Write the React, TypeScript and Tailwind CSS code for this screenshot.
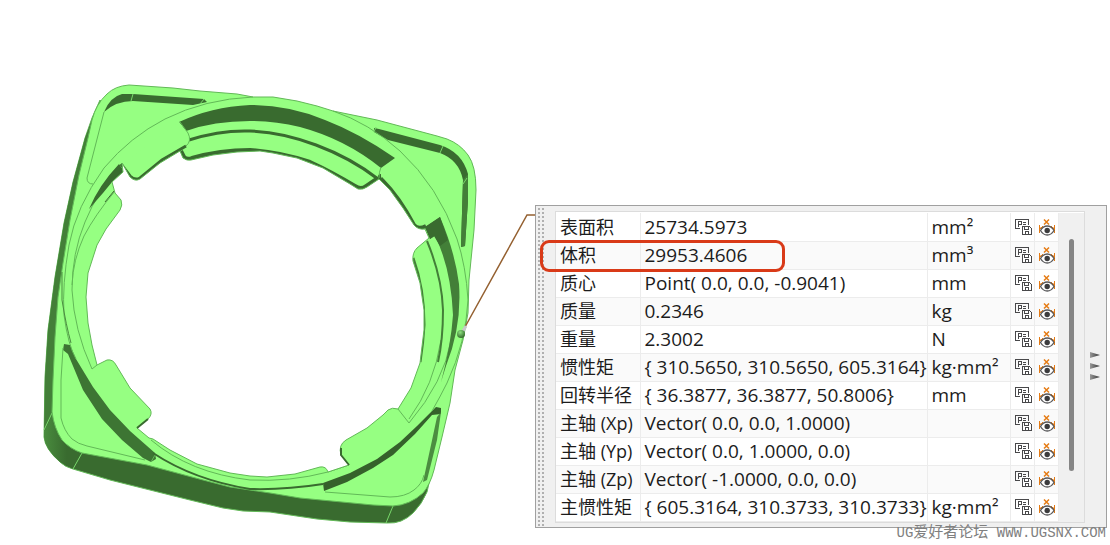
interface Measurement {
  label: string;
  value: string;
  unit: string;
}

const measurements: Measurement[] = [
  { label: '表面积', value: '25734.5973', unit: 'mm²' },
  { label: '体积', value: '29953.4606', unit: 'mm³' },
  { label: '质心', value: 'Point( 0.0, 0.0, -0.9041)', unit: 'mm' },
  { label: '质量', value: '0.2346', unit: 'kg' },
  { label: '重量', value: '2.3002', unit: 'N' },
  { label: '惯性矩', value: '{ 310.5650, 310.5650, 605.3164}', unit: 'kg·mm²' },
  { label: '回转半径', value: '{ 36.3877, 36.3877, 50.8006}', unit: 'mm' },
  { label: '主轴 (Xp)', value: 'Vector( 0.0, 0.0, 1.0000)', unit: '' },
  { label: '主轴 (Yp)', value: 'Vector( 0.0, 1.0000, 0.0)', unit: '' },
  { label: '主轴 (Zp)', value: 'Vector( -1.0000, 0.0, 0.0)', unit: '' },
  { label: '主惯性矩', value: '{ 605.3164, 310.3733, 310.3733}', unit: 'kg·mm²' },
];

const HOLE =
  'M122 163 L130 177 Q135 182 140 179 L160 163 L180 151 L183 158 Q187 161 191 160 L213 155 L237 152 L260 151 L273 153 L297 158 L323 168 L350 184 L358 189 Q363 190 367 187 L379 179 L390 190 L403 208 L414 225 Q418 230 425 229 L429 238 L417 248 Q412 253 413 261 L420 283 L424 310 L424 330 L420 363 L411 388 L398 409 Q392 407 388 410 L383 415 L367 428 L346 440 Q338 445 341 455 L349 465 L328 472 Q326 466 320 467 L295 474 L267 477 L250 476 L230 473 L197 464 L170 450 L153 439 L149 438 L137 428 L148 419 Q153 414 150 409 L130 388 L116 365 Q113 359 107 360 L97 365 L92 345 L88 323 L86 297 L88 273 L97 245 L106 229 L120 210 Q123 205 121 200 L115 193 L112 182 L123 172 Z';

function Part() {
  return (
    <svg viewBox="0 0 535 545" className="block h-[545px] w-[535px] shrink-0" aria-hidden="true">
      <defs>
        <linearGradient id="corner" x1="0" y1="0" x2="1" y2="0">
          <stop offset="0" stopColor="#498c3e" />
          <stop offset="0.6" stopColor="#396b2f" />
        </linearGradient>
        <radialGradient id="ball" cx="0.4" cy="0.3" r="0.7">
          <stop offset="0" stopColor="#8de27f" />
          <stop offset="1" stopColor="#356b2d" />
        </radialGradient>
      </defs>

      {/* outer side walls */}
      <path
        d="M92 118 L85 138 L73 182 L64 223 L55 277 L48 330 L45 377 L44 437 Q45 449 60 462 Q65 467 73 469 L110 480 L190 500 L223 508 L243 511 L270 512 L317 519 L350 522 L387 523 Q402 524 413 513 Q422 504 427 492 L432 470 L100 100 Z"
        fill="#396b2f"
        stroke="#62b957"
      />
      <path d="M92 120 L85 138 L73 182 L64 223 L55 277 L48 330 L45 377 L44 432 L52 415 L55 337 L70 220 Z" fill="#437f38" />
      <path d="M44 432 L44 437 Q45 449 60 462 L73 469 L82 453 L52 415 Z" fill="url(#corner)" />
      <path d="M44 430 L52 413 M73 469 L82 453 M386 523 L393 506" stroke="#78d86b" fill="none" />

      {/* top face */}
      <path
        d="M129 85 Q115 86 107 94 Q96 104 92 120 L88 138 L79 175 L70 220 L63 263 L58 297 L55 337 L53 380 L52 412 Q54 428 62 440 Q70 449 82 453 L147 465 L203 480 L230 487 L270 493 L300 498 L373 505 L393 506 Q410 505 423 493 Q430 485 434 470 L442 437 L450 403 L455 370 L463 340 L468 313 L469 280 L472 250 L474 230 L476 190 Q476 166 468 155 Q460 144 447 139 L437 136 L377 120 L333 111 L317 106 L297 101 L273 97 L253 97 L237 94 L200 91 L173 88 Z"
        fill="#96ff82"
        stroke="#62b957"
      />

      {/* corner pocket, top left */}
      <path d="M104 112 Q110 97 122 94 L133 94 L204 99 L207 102 L193 105 L133 101 Q116 101 104 112 Z" fill="#396b2f" />
      <path d="M133 94 L131 101 M204 99 L200 104" stroke="#78d86b" />
      <path d="M104 112 L87 178 Q87 184 93 184" fill="none" stroke="#62b957" />

      {/* corner pocket, top right */}
      <path d="M374 128 L379 129 L440 145 Q462 152 468 174 L468 200 L465 246 L461 247 L463 180 Q459 160 440 153 L388 140 L374 132 Z" fill="#396b2f" />
      <path d="M463 180 L468 174 L468 200 L465 246 L461 247 Z" fill="#437f38" />
      <path d="M443 146 L440 153 M467 178 L463 184 M376 127 L374 132" stroke="#78d86b" />

      {/* corner pocket, bottom left */}
      <path d="M64 344 L70 345 L76 359 L93 387 L110 410 L130 431 L155 453 L156 459 L151 462 L143 458 L122 440 L102 419 L83 390 L68 354 L63 350 Z" fill="#3d7533" />
      <path d="M63 348 L61 380 L61 418 Q64 431 72 439 Q78 444 87 446 L145 460 M151 462 L155 455" fill="none" stroke="#62b957" />

      {/* corner pocket, bottom right */}
      <path d="M432 411 L436 407 L441 408 L441 414 L432 415 L415 434 L393 455 L373 468 L347 482 L324 491 L323 483 L350 473 L377 459 L400 442 L417 426 Z" fill="#35612b" />
      <path d="M441 412 L437 440 L427 480 L423 482 L431 445 L437 417 Z" fill="#4b8d40" />
      <path d="M325 492 L390 497 Q405 497 414 490 Q422 484 424 475" fill="none" stroke="#62b957" />

      {/* ring edges */}
      <path d="M253 97 Q205 99 165 119 Q130 137 104 168 Q76 207 69 245 Q62 285 64 315 Q68 345 76 359" fill="none" stroke="#62b957" />
      <path d="M122 163 Q98 190 85 222 Q72 253 72 290 Q74 330 92 369 L97 365" fill="none" stroke="#62b957" />
      <path d="M115 191 Q95 215 84 236 Q73 260 72 285" fill="none" stroke="#62b957" />
      <path d="M62 272 L62 300 Q66 325 71 343" fill="none" stroke="#4a8b40" />
      <path d="M333 111 Q369 123 400 151 Q438 186 457 239 Q466 266 468 300 Q466 342 447 383 Q440 397 432 411" fill="none" stroke="#62b957" />
      <path d="M153 453 Q194 480 250 489 Q285 490 323 484" fill="none" stroke="#396b2f" strokeWidth="2" />
      <path d="M151 440 Q190 473 250 480 Q290 482 328 472 M349 465 Q337 469 328 472" fill="none" stroke="#62b957" />
      <path d="M398 409 L409 423 Q444 382 451 340 M409 419 Q434 385 441 340" fill="none" stroke="#62b957" />

      {/* inner recess, top */}
      <path
        d="M179 122 Q211 107 250 105 Q289 105 325 120 Q359 133 395 158 L381 168 Q345 139 300 127 Q275 121 250 121 Q214 121 186 131 Z"
        fill="#396b2f"
      />
      <path d="M189 140 Q220 130 250 131 Q282 132 316 145 Q351 158 378 179" fill="none" stroke="#396b2f" strokeWidth="3" />
      <path d="M181 151 L184 157 Q187 160 192 158 Q220 150 250 150 Q280 152 310 162 Q332 172 355 186 Q361 190 366 186 L378 178" fill="none" stroke="#396b2f" strokeWidth="4" />
      <path d="M179 122 L188 133 Q191 141 187 146 L140 178 Q135 181 130 176 L121 165" fill="#96ff82" />
      <path d="M180 122 L188 133 Q192 141 186 146" fill="none" stroke="#62b957" />
      <path d="M186 146 L162 160 L140 178 Q135 181 130 176 L121 164" fill="none" stroke="#396b2f" strokeWidth="3" />
      <path d="M381 176 Q378 176 383 181 Q399 197 414 225 Q418 230 426 226" fill="none" stroke="#396b2f" strokeWidth="4" />
      <path d="M381 167 Q379 172 379 178" fill="none" stroke="#62b957" />

      {/* inner recess, left */}
      <path d="M119 164 L124 171 L112 182 L103 193 L89 209 Q99 185 119 164 Z" fill="#396b2f" />
      <path d="M114 191 L105 202" stroke="#396b2f" />

      {/* inner recess, right */}
      <path
        d="M425 227 L440 217 Q455 252 459 284 Q462 326 446 366 L441 382 Q451 345 453 315 Q451 268 435 236 L430 239 Z"
        fill="#437f38"
      />
      <path d="M425 227 L440 217 L448 240 L440 246 L434 236 L430 239 Z" fill="#396b2f" />
      <path d="M427 241 Q442 277 443 310 Q443 340 438 362" fill="none" stroke="#437f38" strokeWidth="2" />
      <path d="M413 258 Q424 288 424 325 Q423 343 420 362" fill="none" stroke="#437f38" strokeWidth="3" />

      <path d={HOLE} fill="#ffffff" stroke="#62b957" />
      <path d="M137 428 L148 419 M341 448 L341 455 L349 465" stroke="#396b2f" strokeWidth="2" fill="none" />

      {/* leader to the results panel */}
      <path d="M465 327 L527 215 L535 215" fill="none" stroke="#946030" strokeWidth="1.5" />
      <path d="M463 331 L466 326" stroke="#c8c8c8" strokeWidth="3" />
      <circle cx="461" cy="334" r="4" fill="url(#ball)" />
    </svg>
  );
}

function SaveExpressionIcon() {
  return (
    <svg viewBox="0 0 18 18" className="block size-[18px]" fill="none" stroke="#48484a" shapeRendering="crispEdges">
      <path d="M6 10.5H1.5V1.5H14.5V7" />
      <path d="M4.5 9V3.5H7.5V6.5H4.5M9 4.5H12M9 6.5H12" />
      <path d="M8.5 8.5H15.5L17.5 10.5V16.5H8.5Z" fill="#ffffff" />
      <path d="M10.5 8.5V11.5H14.5V8.5M11.5 16V13.5H14.5V16" />
    </svg>
  );
}

function ShowAnnotationIcon() {
  return (
    <svg viewBox="0 0 18 18" className="block size-[18px]" fill="none">
      <path d="M6 1.5L11 6.5M11 1.5L6 6.5" stroke="#e57b14" strokeWidth="1.5" />
      <path d="M1.5 7V15M16.5 7V15M2 11L5 8M16 11L13 8M2 10H5M13 10H16" stroke="#e57b14" />
      <path d="M2.5 12.5C6 6.5 12.5 6.5 16 12.5C12.5 18.5 6 18.5 2.5 12.5Z" fill="#ffffff" stroke="#58585a" strokeWidth="1.3" />
      <circle cx="9.2" cy="12.5" r="2.7" fill="#3c3c3e" />
    </svg>
  );
}

function ResultRow({ label, value, unit }: Measurement) {
  return (
    <tr className="h-7 border-b border-[#ececec] bg-white even:bg-[#fafafa]">
      <th scope="row" className="w-[84px] border-r border-[#ececec] pl-1 text-left text-[18px] font-normal">
        {label}
      </th>
      <td className="w-[286px] border-r border-[#ececec] pl-1">{value}</td>
      <td className="border-r border-[#ececec] pl-1">{unit}</td>
      <td className="w-6 border-r border-[#ececec]">
        <button type="button" aria-label={`${label} P=`} className="mx-auto block">
          <SaveExpressionIcon />
        </button>
      </td>
      <td className="w-6 border-r border-[#ececec]">
        <button type="button" aria-label={`${label} X`} className="mx-auto block">
          <ShowAnnotationIcon />
        </button>
      </td>
    </tr>
  );
}

function Grip() {
  return (
    <svg className="w-[10px] shrink-0 self-stretch" aria-hidden="true">
      <defs>
        <pattern id="dots" width="4" height="4" patternUnits="userSpaceOnUse">
          <rect x="2" y="2" width="2" height="2" fill="#b0b0b0" />
        </pattern>
      </defs>
      <rect y="1" width="8" height="100%" fill="url(#dots)" />
    </svg>
  );
}

export default function App() {
  return (
    <main className="flex min-h-screen items-start bg-white pr-[3px] font-['Open_Sans','Noto_Sans_CJK_SC',sans-serif] text-[#1c1c1c]">
      <Part />

      <section className="relative mt-[205px] flex min-w-0 flex-1 border border-[#a0a0a0] bg-[#f0f0f0]">
        <Grip />

        <div className="mt-[5px] mb-1 ml-[9px] flex min-w-0 flex-1 border border-[#dcdcdc] bg-white pt-px">
          <table className="flex-1 border-collapse text-[19px] leading-5 whitespace-nowrap">
            <tbody>
              {measurements.map((item) => (
                <ResultRow key={item.label} {...item} />
              ))}
            </tbody>
          </table>
          <div className="w-[25px] shrink-0 bg-[#f0f0f0] pt-[26px] pl-[10px]">
            <div className="h-[232px] w-[5px] rounded-full bg-[#858585]" />
          </div>
        </div>

        <button type="button" aria-label="►" className="flex w-[21px] shrink-0 items-center justify-center">
          <svg viewBox="0 0 12 32" className="h-8 w-3">
            <defs>
              <linearGradient id="arrow" x1="0" x2="1">
                <stop offset="0" stopColor="#999999" />
                <stop offset="1" stopColor="#333333" />
              </linearGradient>
            </defs>
            <path d="M0 2L10 5L0 8ZM0 13L10 16L0 19ZM0 24L10 27L0 30Z" fill="url(#arrow)" />
          </svg>
        </button>

        {/* highlight on the volume row */}
        <div className="pointer-events-none absolute top-[34px] left-1 h-8 w-[245px] rounded-[9px] border-3 border-[#d93a18]" />

        <p className="absolute top-full right-0 -mt-1 font-['Liberation_Mono','Noto_Sans_CJK_SC',monospace] text-[14px] leading-5 whitespace-nowrap text-[#808080]">
          UG<span className="text-[15px]">爱好者论坛</span> WWW.UGSNX.COM
        </p>
      </section>
    </main>
  );
}
